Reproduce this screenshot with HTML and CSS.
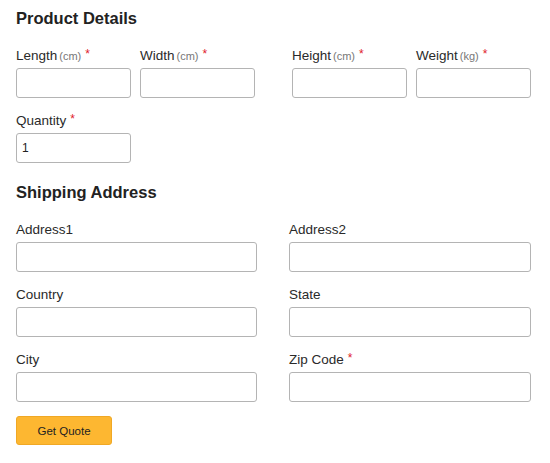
FILE: index.html
```html
<!DOCTYPE html>
<html lang="en">
<head>
    <meta charset="UTF-8">
    <meta name="viewport" content="width=device-width, initial-scale=1.0">
    <title>Get a Quote</title>
    <link rel="stylesheet" href="styles.css">
</head>
<body>
    <form class="quote-form">
        <h2>Product Details</h2>

        <div class="dims">
            <div class="pair">
                <div class="field">
                    <label>Length<span class="unit">(cm)</span><span class="req">*</span></label>
                    <input type="text">
                </div>
                <div class="field">
                    <label>Width<span class="unit">(cm)</span><span class="req">*</span></label>
                    <input type="text">
                </div>
            </div>
            <div class="pair">
                <div class="field">
                    <label>Height<span class="unit">(cm)</span><span class="req">*</span></label>
                    <input type="text">
                </div>
                <div class="field">
                    <label>Weight<span class="unit">(kg)</span><span class="req">*</span></label>
                    <input type="text">
                </div>
            </div>
        </div>

        <div class="field qty">
            <label>Quantity<span class="req">*</span></label>
            <input type="text" value="1">
        </div>

        <h2>Shipping Address</h2>

        <div class="address">
            <div class="field">
                <label>Address1</label>
                <input type="text">
            </div>
            <div class="field">
                <label>Address2</label>
                <input type="text">
            </div>
            <div class="field">
                <label>Country</label>
                <input type="text">
            </div>
            <div class="field">
                <label>State</label>
                <input type="text">
            </div>
            <div class="field">
                <label>City</label>
                <input type="text">
            </div>
            <div class="field">
                <label>Zip Code<span class="req">*</span></label>
                <input type="text">
            </div>
        </div>

        <button type="button" class="quote-btn">Get Quote</button>
    </form>
</body>
</html>
```

FILE: styles.css
```css
body {
    margin: 0;
    padding: 0;
    background-color: #fff;
    font-family: "Liberation Sans", Arial, sans-serif;
    color: #333;
}
.quote-form {
    padding: 8px 16px;
}
.quote-form h2 {
    margin: 0 0 19px 0;
    font-size: 16.5px;
    line-height: 20px;
    font-weight: bold;
    color: #222;
}
.field {
    display: flex;
    flex-direction: column;
}
.field label {
    display: block;
    height: 18px;
    font-size: 13.5px;
    line-height: 18px;
    color: #2a2a2a;
    margin-bottom: 3px;
    white-space: nowrap;
}
.field .unit {
    font-size: 11px;
    line-height: 1;
    color: #777;
    margin-left: 2px;
}
.field .req {
    color: #e0202a;
    font-size: 12px;
    line-height: 1;
    margin-left: 4px;
    position: relative;
    top: -2px;
}
.field input {
    box-sizing: border-box;
    height: 30px;
    border: 1.5px solid #b4b4b4;
    border-radius: 3px;
    padding: 0 5px;
    font-family: "Liberation Sans", Arial, sans-serif;
    font-size: 12px;
    color: #222;
    background: #fff;
}
.dims {
    display: flex;
    gap: 37px;
    margin-bottom: 14px;
}
.pair {
    display: flex;
    gap: 9px;
}
.pair .field {
    width: 115px;
}
.qty {
    width: 115px;
    margin-bottom: 19px;
}
.address {
    display: grid;
    grid-template-columns: 241px 242px;
    column-gap: 32px;
    row-gap: 14px;
    margin-bottom: 14px;
}
.quote-btn {
    width: 96px;
    height: 29px;
    background-color: #fdb731;
    border: 1px solid #f0a825;
    border-radius: 3px;
    font-family: "Liberation Sans", Arial, sans-serif;
    font-size: 11.5px;
    color: #222;
    cursor: pointer;
}
```
